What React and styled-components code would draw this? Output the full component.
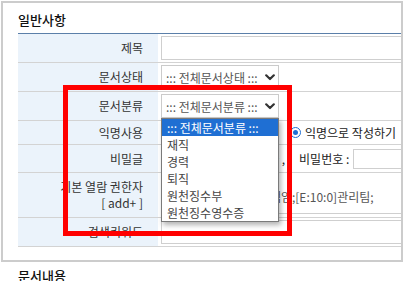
import React from 'react';
import styled, { createGlobalStyle } from 'styled-components';

const GlobalStyle = createGlobalStyle`
  * { box-sizing: border-box; }
  body {
    margin: 0;
    font-family: "Noto Sans CJK KR", "Noto Sans", sans-serif;
    background: #fff;
    overflow: hidden;
  }
`

const Page = styled.div`
  position: relative;
  width: 406px;
  height: 281px;
  overflow: hidden;
`

const Panel = styled.div`
  margin: 1px 3px 0 1px;
  border: 2px solid #cccccc;
  padding: 9px 0 13px 15px;
  overflow: hidden;
`

const SectionTitle = styled.div`
  font-size: 13px;
  line-height: 16px;
  color: #111;
  font-weight: 500;
  padding-left: ${p => p.$indent || 0}px;
  margin: ${p => p.$top || 0}px 0 5px;
`

const Table = styled.div`
  width: 420px;
  border-top: 1px solid #5b7fa9;
`

const Row = styled.div`
  display: grid;
  grid-template-columns: 140px 1fr;
  height: ${p => p.$h}px;
  border-bottom: 1px solid #d3d3d3;
`

const Label = styled.div`
  background: #ebf3fb;
  display: flex;
  flex-direction: column;
  justify-content: center;
  align-items: flex-end;
  padding-right: 15px;
  font-size: 12px;
  line-height: 16px;
  color: #333;
`

const Cell = styled.div`
  display: flex;
  align-items: center;
  padding-left: 3px;
  white-space: nowrap;
  font-size: 12px;
  color: #222;
`

const TextInput = styled.div`
  width: ${p => p.$w}px;
  height: ${p => p.$h || 24}px;
  border: 1px solid #cfcfcf;
  background: #fff;
  flex-shrink: 0;
`

const SelectBox = styled.div`
  position: relative;
  width: 118px;
  height: 24px;
  border: 1px solid #cbcbcb;
  background: #fff;
  display: flex;
  align-items: center;
  justify-content: space-between;
  padding: 0 3px 0 4px;
  font-size: 12px;
  color: #555;
`

const Chevron = () => (
  <svg width="10" height="7" viewBox="0 0 10 7">
    <path d="M1.2 1.3 L5 5 L8.8 1.3" fill="none" stroke="#333" strokeWidth="2.2" strokeLinecap="round" strokeLinejoin="round" />
  </svg>
)

const OptionList = styled.div`
  position: absolute;
  top: calc(100% + 1px);
  left: -1px;
  width: 118px;
  background: #fff;
  border: 1px solid #7a7a7a;
  box-shadow: 2px 3px 5px rgba(0, 0, 0, 0.3);
  z-index: 4;
`

const Option = styled.div`
  height: 17px;
  line-height: 17px;
  padding-left: 5px;
  font-size: 12px;
  color: ${p => (p.$active ? '#fff' : '#444')};
  background: ${p => (p.$active ? '#1f6fd3' : 'transparent')};
`

const Choice = styled.span`
  display: inline-flex;
  align-items: center;
  width: ${p => (p.$w ? `${p.$w}px` : 'auto')};
  flex-shrink: 0;
`

const Radio = styled.span`
  width: 11px;
  height: 11px;
  border-radius: 50%;
  border: 1.5px solid ${p => (p.$on ? '#1f6fd3' : '#767676')};
  display: inline-flex;
  align-items: center;
  justify-content: center;
  margin-right: 4px;
  &::after {
    content: '';
    width: 5px;
    height: 5px;
    border-radius: 50%;
    background: ${p => (p.$on ? '#1f6fd3' : 'transparent')};
  }
`

const Check = styled.span`
  width: 12px;
  height: 12px;
  border: 1px solid #767676;
  border-radius: 2px;
  margin-right: 4px;
`

const PwLabel = styled.span`
  margin: 0 4px 0 14px;
  color: #222;
`

const ReadBox = styled.div`
  align-self: flex-start;
  width: 300px;
  height: 41px;
  border-bottom: 1px solid #cfcfcf;
  display: flex;
  align-items: center;
  padding: 6px 0 0 4px;
  color: #555;
`

const Highlight = styled.div`
  position: absolute;
  left: 63px;
  top: 85px;
  width: 229px;
  height: 151px;
  border: 5px solid #ff0000;
  pointer-events: none;
  z-index: 5;
`

const categories = ['재직', '경력', '퇴직', '원천징수부', '원천징수영수증']

function App() {
  return (
    <Page>
      <GlobalStyle />
      <Panel>
        <SectionTitle>일반사항</SectionTitle>
        <Table>
          <Row $h={29}>
            <Label>제목</Label>
            <Cell><TextInput $w={300} /></Cell>
          </Row>
          <Row $h={29}>
            <Label>문서상태</Label>
            <Cell>
              <SelectBox>::: 전체문서상태 ::: <Chevron /></SelectBox>
            </Cell>
          </Row>
          <Row $h={29}>
            <Label>문서분류</Label>
            <Cell>
              <SelectBox>
                ::: 전체문서분류 ::: <Chevron />
                <OptionList>
                  <Option $active>::: 전체문서분류 :::</Option>
                  {categories.map(c => <Option key={c}>{c}</Option>)}
                </OptionList>
              </SelectBox>
            </Cell>
          </Row>
          <Row $h={24}>
            <Label>익명사용</Label>
            <Cell>
              <Choice $w={129}><Radio />실명으로 작성하기</Choice>
              <Choice><Radio $on />익명으로 작성하기</Choice>
            </Cell>
          </Row>
          <Row $h={28}>
            <Label>비밀글</Label>
            <Cell>
              <Choice><Check />비밀글로 작성합니다 ,</Choice>
              <PwLabel>비밀번호 :</PwLabel>
              <TextInput $w={120} $h={20} />
            </Cell>
          </Row>
          <Row $h={45}>
            <Label>
              <span>기본 열람 권한자</span>
              <span>[ add+ ]</span>
            </Label>
            <Cell>
              <ReadBox>[D:10:00]경영지원팀책임;[E:10:0]관리팀;</ReadBox>
            </Cell>
          </Row>
          <Row $h={29}>
            <Label>검색키워드</Label>
            <Cell><TextInput $w={300} /></Cell>
          </Row>
        </Table>
      </Panel>
      <SectionTitle $indent={18} $top={6}>문서내용</SectionTitle>
      <Highlight />
    </Page>
  )
}

export default App;
